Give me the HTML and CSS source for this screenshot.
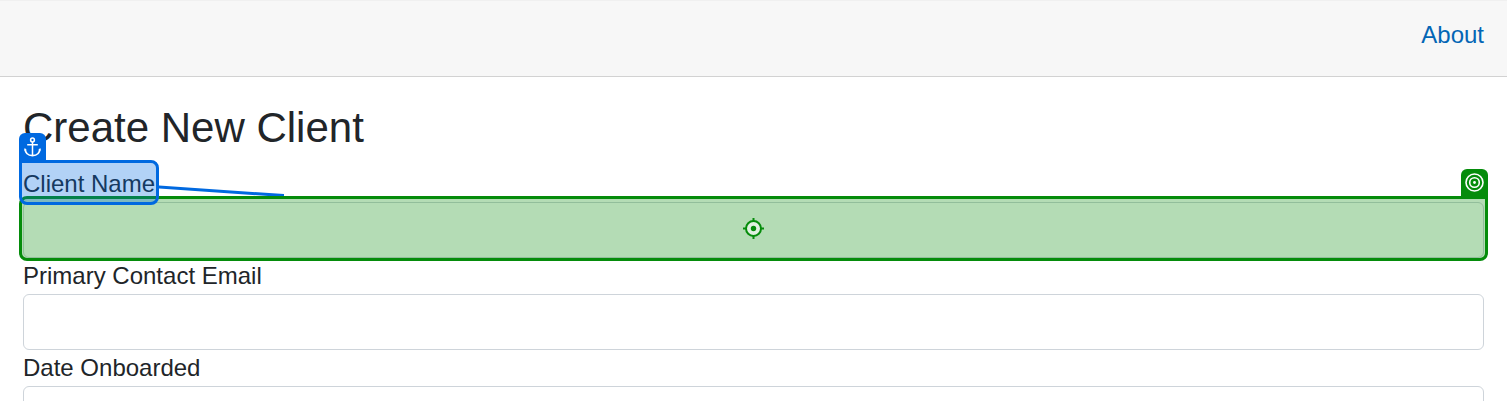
FILE: index.html
```html
<!DOCTYPE html>
<html lang="en">
<head>
<meta charset="utf-8">
<meta name="viewport" content="width=device-width, initial-scale=1">
<title>Create New Client</title>
<link rel="stylesheet" href="styles.css">
</head>
<body>
<header class="navbar">
  <nav><a class="nav-link" href="#about">About</a></nav>
</header>
<main class="content">
  <h1 class="title">Create New Client</h1>
  <form class="form">
    <div class="field">
      <div class="label-row">
        <label class="label" for="client-name">Client Name</label>
        <div class="mark mark-anchor">
          <span class="tag tag-anchor">
            <svg width="17" height="20" viewBox="0 0 17 20" fill="none" stroke="#fff" stroke-width="1.500">
              <circle cx="8.500" cy="3" r="1.900"/>
              <path d="M8.500 5v14M3.200 7.700h10.600"/>
              <path d="M1.100 11.800c.2 4.300 3.200 6.800 7.400 6.800s7.200-2.500 7.400-6.800" stroke-width="1.600"/>
              <path d="M.5 14.200V11.300l2.300 1.800zM16.500 14.200V11.300l-2.300 1.800z" fill="#fff" stroke="none"/>
            </svg>
          </span>
          <svg class="connector" width="125" height="14" viewBox="0 0 125 14">
            <path d="M-3 4.800L137 14.400" stroke="#0069e0" stroke-width="3"/>
          </svg>
        </div>
      </div>
      <div class="control">
        <input class="input" id="client-name" type="text">
        <div class="mark mark-target">
          <span class="tag tag-target">
            <svg width="19" height="19" viewBox="0 0 19 19" fill="none" stroke="#fff" stroke-width="1.600">
              <circle cx="9.500" cy="9.500" r="8.500"/>
              <circle cx="9.500" cy="9.500" r="4.800"/>
              <circle cx="9.500" cy="9.500" r="1.400" fill="#fff" stroke="none"/>
            </svg>
          </span>
          <svg width="21" height="21" viewBox="0 0 21 21" fill="none" stroke="#058c0b" stroke-width="2">
            <circle cx="10.500" cy="10.500" r="7.500" fill="#e0f1e0"/>
            <circle cx="10.500" cy="10.500" r="2.700" fill="#058c0b" stroke="none"/>
            <path d="M10.500 0v3.500M10.500 17.500V21M0 10.500h3.500M17.500 10.500H21"/>
          </svg>
        </div>
      </div>
    </div>
    <div class="field">
      <div class="label-row"><label class="label" for="email">Primary Contact Email</label></div>
      <input class="input" id="email" type="email">
    </div>
    <div class="field">
      <div class="label-row"><label class="label" for="onboarded">Date Onboarded</label></div>
      <input class="input" id="onboarded" type="text">
    </div>
  </form>
</main>
</body>
</html>
```
FILE: styles.css
```css
* {
  box-sizing: border-box;
}

body {
  margin: 0;
  background: #fff;
  color: #212529;
  font-family: "Liberation Sans", Arial, sans-serif;
  font-size: 24px;
  line-height: 36px;
}

.navbar {
  display: flex;
  justify-content: flex-end;
  padding: 16px 23px 23px;
  background: #f7f7f7;
  border-top: 1px solid #f0f0f0;
  border-bottom: 1px solid #d2d2d2;
}

.nav-link {
  color: #0366b5;
  text-decoration: none;
}

.content {
  padding: 25px 23px 0;
}

.title {
  margin: 0 0 12px;
  font-size: 42px;
  font-weight: 400;
  line-height: 52px;
}

.label-row,
.control {
  position: relative;
}

.label-row {
  width: fit-content;
}

.label {
  display: block;
}

.input {
  display: block;
  width: 100%;
  height: 56px;
  padding: 8px 16px;
  border: 1px solid #ced4da;
  border-radius: 6px;
  background: #fff;
  font: inherit;
}

.mark {
  position: absolute;
  inset: -6px -4px -3px;
  border: 3px solid;
  border-radius: 8px;
}

.mark-anchor {
  z-index: 2;
  border-color: #0069e0;
  border-top-left-radius: 0;
  background: rgba(0, 105, 224, 0.3);
}

.mark-target {
  z-index: 1;
  display: flex;
  align-items: center;
  justify-content: center;
  border-color: #058c0b;
  border-top-right-radius: 0;
  background: rgba(5, 140, 11, 0.3);
}

.tag {
  position: absolute;
  bottom: 100%;
  display: flex;
  align-items: center;
  justify-content: center;
  width: 27px;
  height: 30px;
  padding-bottom: 3px;
  border-radius: 6px 6px 0 0;
}

.tag-anchor {
  left: -3px;
  background: #0069e0;
}

.tag-target {
  right: -3px;
  background: #058c0b;
}

.connector {
  position: absolute;
  top: 19px;
  left: calc(100% + 3px);
}
```
